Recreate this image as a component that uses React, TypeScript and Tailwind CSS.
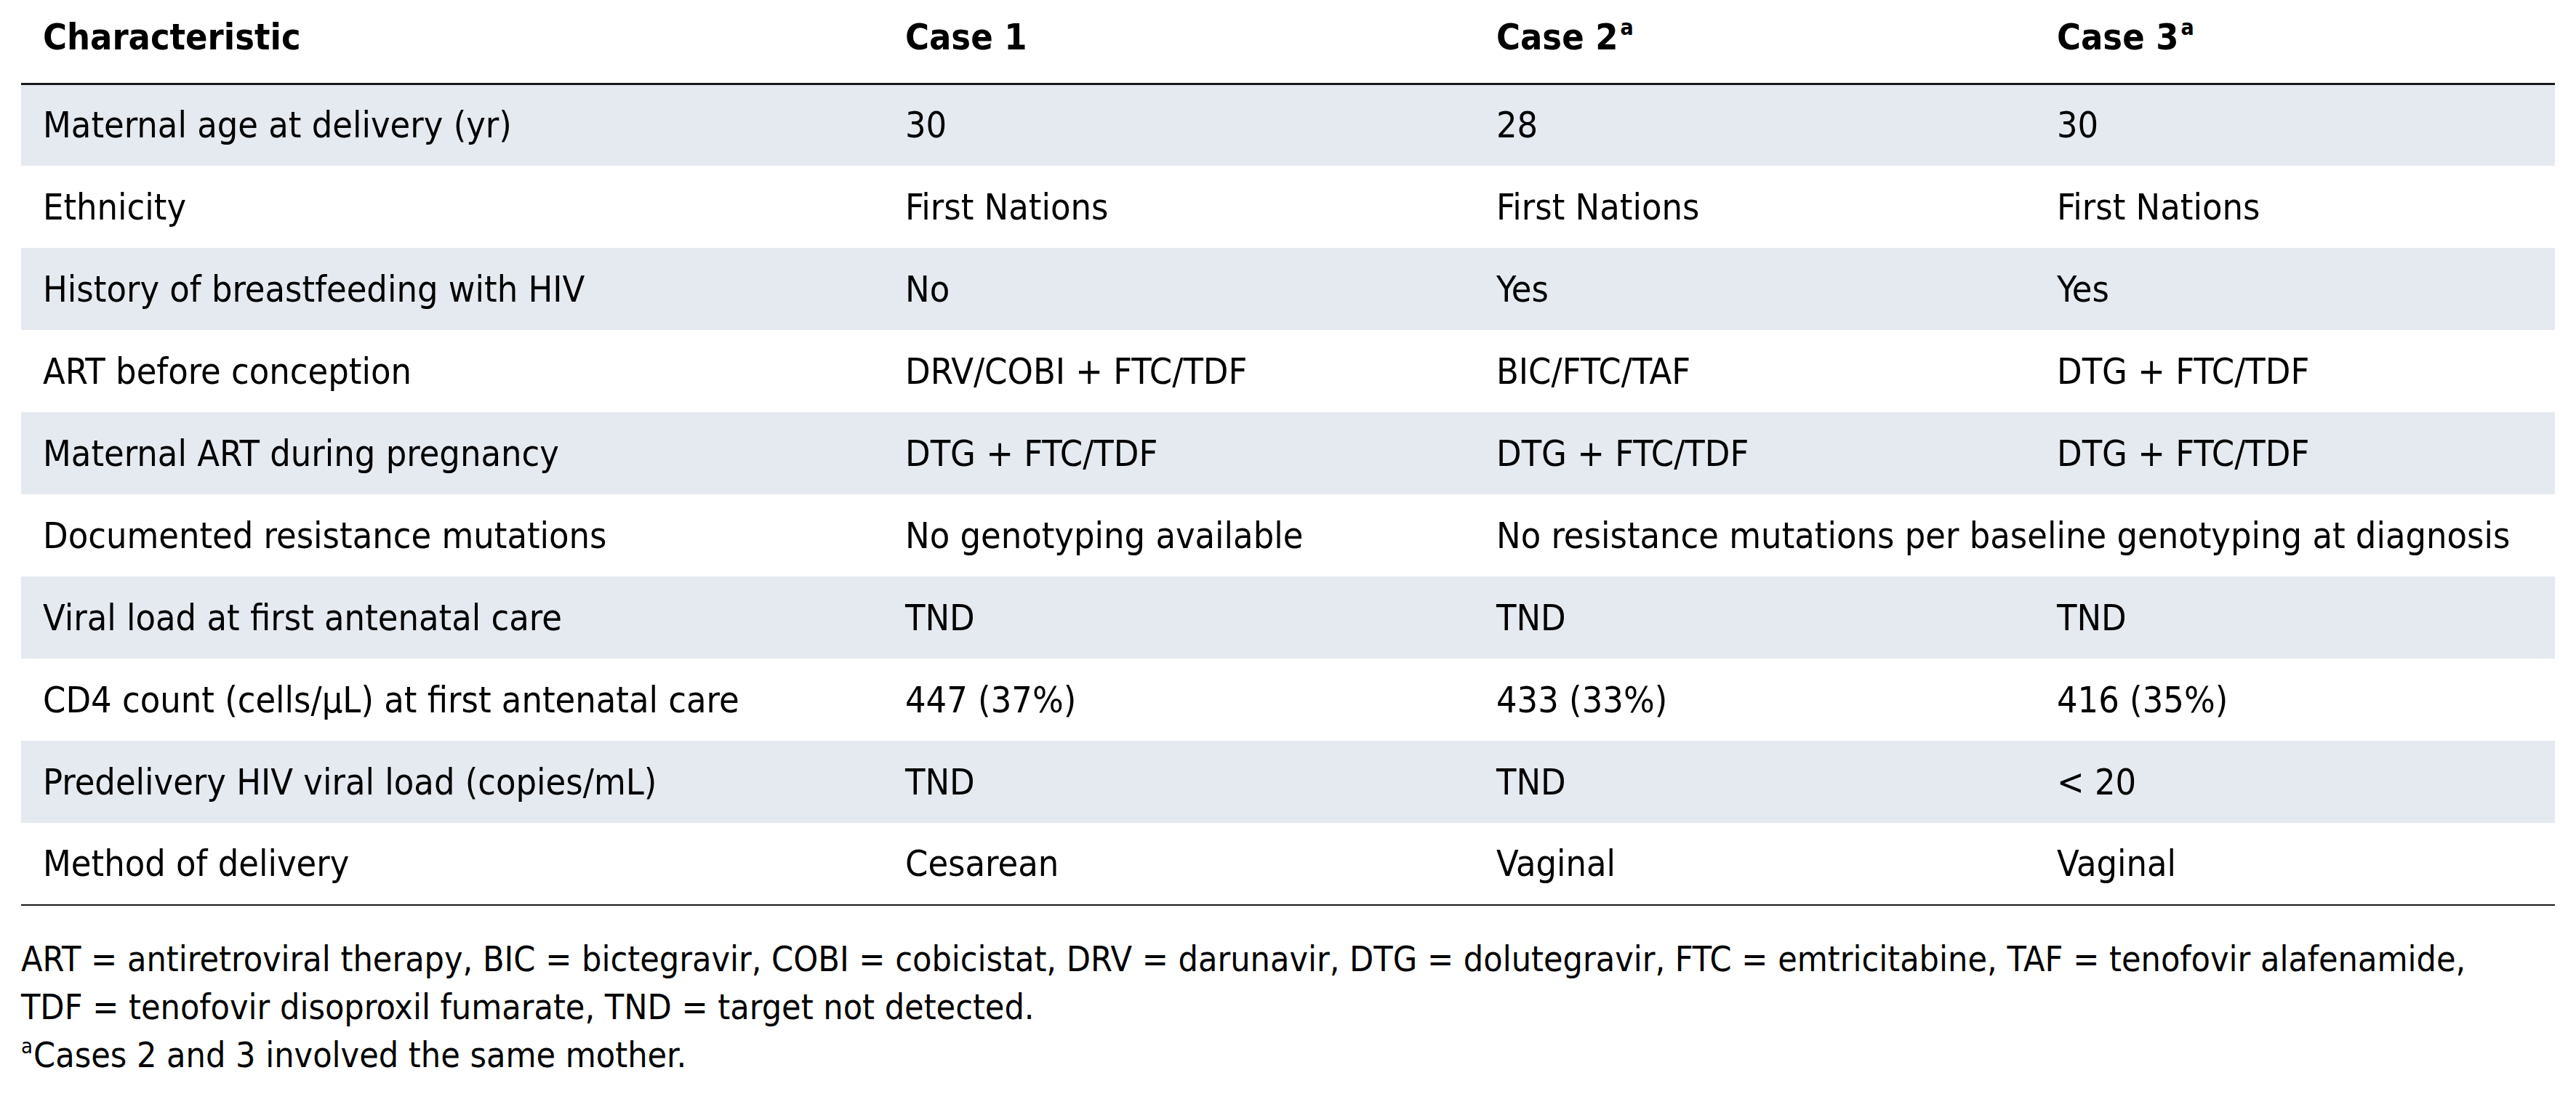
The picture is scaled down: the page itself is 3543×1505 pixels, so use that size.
const rows: { label: string; cells: string[]; span?: boolean }[] = [
  { label: "Maternal age at delivery (yr)", cells: ["30", "28", "30"] },
  { label: "Ethnicity", cells: ["First Nations", "First Nations", "First Nations"] },
  { label: "History of breastfeeding with HIV", cells: ["No", "Yes", "Yes"] },
  { label: "ART before conception", cells: ["DRV/COBI + FTC/TDF", "BIC/FTC/TAF", "DTG + FTC/TDF"] },
  { label: "Maternal ART during pregnancy", cells: ["DTG + FTC/TDF", "DTG + FTC/TDF", "DTG + FTC/TDF"] },
  {
    label: "Documented resistance mutations",
    cells: ["No genotyping available", "No resistance mutations per baseline genotyping at diagnosis"],
    span: true,
  },
  { label: "Viral load at first antenatal care", cells: ["TND", "TND", "TND"] },
  { label: "CD4 count (cells/μL) at first antenatal care", cells: ["447 (37%)", "433 (33%)", "416 (35%)"] },
  { label: "Predelivery HIV viral load (copies/mL)", cells: ["TND", "TND", "< 20"] },
  { label: "Method of delivery", cells: ["Cesarean", "Vaginal", "Vaginal"] },
];

function Sup() {
  return <sup className="text-[30px] font-bold relative -top-[20px] ml-[3px]">a</sup>;
}

export default function App() {
  return (
    <div
      className="w-[3543px] h-[1505px] bg-white text-black text-[50px] leading-none"
      style={{ fontFamily: '"DejaVu Sans Condensed", "Liberation Sans", sans-serif' }}
    >
      <div className="pl-[29px] w-[3514px]">
        <table className="w-full table-fixed border-collapse">
          <colgroup>
            <col className="w-[1186px]" />
            <col className="w-[813px]" />
            <col className="w-[771px]" />
            <col />
          </colgroup>
          <thead>
            <tr className="h-[115px] border-b-[3px] border-[#1a1a1a]">
              <th className="text-left font-bold pl-[30px] pb-[12px]">Characteristic</th>
              <th className="text-left font-bold pl-[30px] pb-[12px]">Case 1</th>
              <th className="text-left font-bold pl-[30px] pb-[12px]">
                Case 2<Sup />
              </th>
              <th className="text-left font-bold pl-[30px] pb-[12px]">
                Case 3<Sup />
              </th>
            </tr>
          </thead>
          <tbody>
            {rows.map((r, i) => (
              <tr
                key={r.label}
                className={`h-[113px] ${i % 2 === 0 ? "bg-[#e5e9f0]" : "bg-white"} ${
                  i === rows.length - 1 ? "border-b-[2px] border-[#1a1a1a]" : ""
                }`}
              >
                <td className="pl-[30px] whitespace-nowrap">{r.label}</td>
                {r.span ? (
                  <>
                    <td className="pl-[30px] whitespace-nowrap">{r.cells[0]}</td>
                    <td className="pl-[30px] whitespace-nowrap" colSpan={2}>
                      {r.cells[1]}
                    </td>
                  </>
                ) : (
                  r.cells.map((c, j) => (
                    <td key={j} className="pl-[30px] whitespace-nowrap">
                      {c}
                    </td>
                  ))
                )}
              </tr>
            ))}
          </tbody>
        </table>

        <div className="mt-[40px] text-[48px] leading-[66px] whitespace-nowrap">
          <p>
            ART = antiretroviral therapy, BIC = bictegravir, COBI = cobicistat, DRV = darunavir, DTG = dolutegravir,
            FTC = emtricitabine, TAF = tenofovir alafenamide,
          </p>
          <p>TDF = tenofovir disoproxil fumarate, TND = target not detected.</p>
          <p>
            <sup className="text-[29px] relative -top-[19px] mr-[1px]">a</sup>Cases 2 and 3 involved the same mother.
          </p>
        </div>
      </div>
    </div>
  );
}
